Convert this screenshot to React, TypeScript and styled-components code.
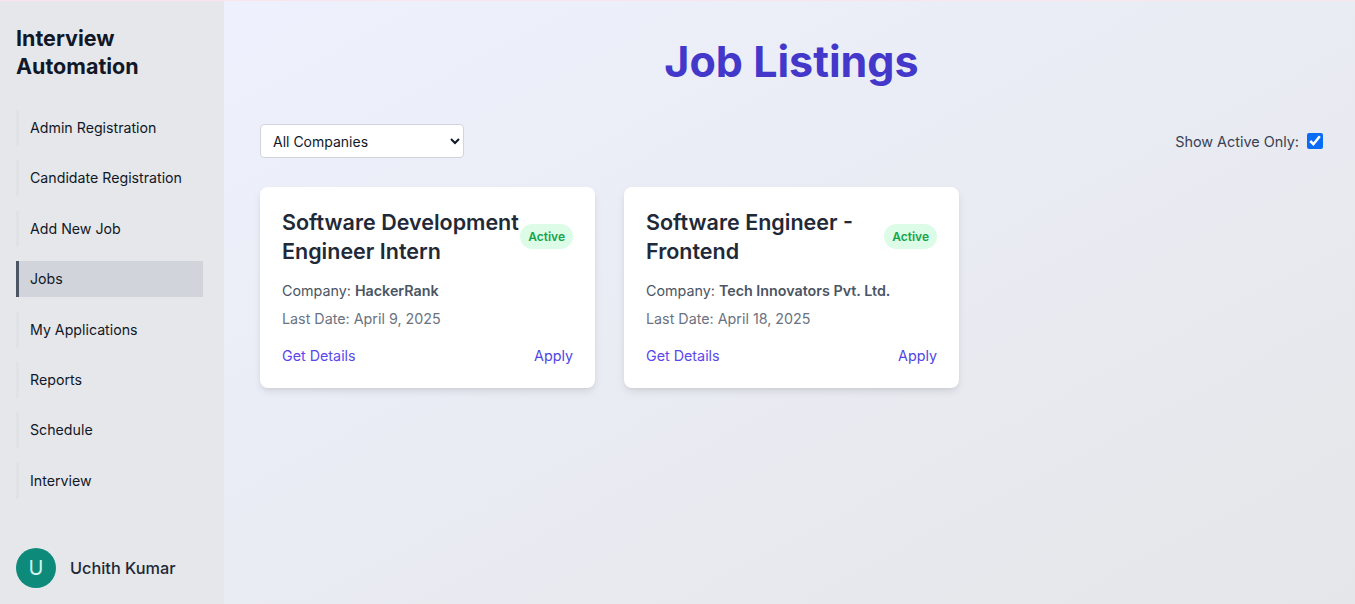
import styled, { createGlobalStyle } from 'styled-components'
import { FC } from 'react'

const GlobalStyle = createGlobalStyle`
  * {
    box-sizing: border-box;
  }
  body {
    margin: 0;
    font-family: Inter, "Noto Sans", sans-serif;
    color: #111827;
  }
`

const Layout = styled.div`
  display: flex;
  min-height: 100vh;
  border-top: 1px solid #fbe4ec;
`

const Sidebar = styled.aside`
  width: 224px;
  flex-shrink: 0;
  background: #e5e7eb;
  display: flex;
  flex-direction: column;
  padding: 23px 16px 16px;
`

const Brand = styled.div`
  font-size: 21.5px;
  line-height: 28px;
  font-weight: 700;
  color: #111827;
  margin-bottom: 30px;
`

const Nav = styled.nav`
  display: flex;
  flex-direction: column;
  gap: 14.4px;
  flex: 1;
`

const NavItem = styled.a<{ $active?: boolean }>`
  display: block;
  height: 36px;
  line-height: 36px;
  margin-right: 5px;
  padding-left: 11px;
  font-size: 14.2px;
  color: #111827;
  text-decoration: none;
  border-left: 3px solid ${(p) => (p.$active ? '#4b5563' : '#e0e2e6')};
  background: ${(p) => (p.$active ? '#d1d5db' : 'transparent')};
  cursor: pointer;
`

const User = styled.div`
  display: flex;
  align-items: center;
  gap: 14px;
`

const Avatar = styled.div`
  width: 40px;
  height: 40px;
  border-radius: 50%;
  background: #0e8a7b;
  color: #d6f5ef;
  display: flex;
  align-items: center;
  justify-content: center;
  font-size: 20px;
`

const UserName = styled.span`
  font-size: 16.3px;
  font-weight: 500;
  color: #1f2937;
`

const Main = styled.main`
  flex: 1;
  min-width: 0;
  background: linear-gradient(to bottom right, #eef1fd, #e5e6e9);
  padding: 36px 32px 32px 36px;
`

const Heading = styled.h1`
  margin: 0 0 39px;
  text-align: center;
  font-size: 43px;
  line-height: 48px;
  font-weight: 700;
  color: #4338ca;
`

const Toolbar = styled.div`
  display: flex;
  justify-content: space-between;
  align-items: center;
  margin-bottom: 29px;
`

const Select = styled.select`
  width: 204px;
  height: 34px;
  padding: 0 8px;
  font-family: Inter, sans-serif;
  font-size: 14px;
  color: #111827;
  background: #fff;
  border: 1px solid #d1d5db;
  border-radius: 4px;
`

const Toggle = styled.label`
  display: flex;
  align-items: center;
  gap: 8px;
  font-size: 14.4px;
  color: #374151;

  input {
    width: 16px;
    height: 16px;
    margin: 0;
    accent-color: #0a6cf5;
  }
`

const Grid = styled.div`
  display: grid;
  grid-template-columns: repeat(3, minmax(0, 1fr));
  gap: 29px;
`

const Card = styled.div`
  background: #fff;
  border-radius: 8px;
  padding: 21px 22px 22px;
  box-shadow: 0 4px 8px -1px rgba(0, 0, 0, 0.1), 0 2px 4px -2px rgba(0, 0, 0, 0.08);
`

const CardHead = styled.div`
  display: flex;
  justify-content: space-between;
  align-items: center;
  margin-bottom: 15px;
`

const JobTitle = styled.h2`
  margin: 0;
  font-size: 21.5px;
  line-height: 29px;
  font-weight: 600;
  color: #1f2937;
`

const Badge = styled.span`
  flex-shrink: 0;
  margin-bottom: 1px;
  padding: 4px 8px;
  line-height: 17px;
  font-size: 12px;
  font-weight: 600;
  color: #16a34a;
  background: #dcfce7;
  border-radius: 999px;
`

const Info = styled.p<{ $muted?: boolean }>`
  margin: 0 0 8px;
  font-size: 14.3px;
  line-height: 20px;
  color: ${(p) => (p.$muted ? '#6b7280' : '#4b5563')};

  b {
    font-weight: 600;
  }
`

const Actions = styled.div`
  display: flex;
  justify-content: space-between;
  margin-top: 17px;
`

const LinkButton = styled.a<{ $tone: string }>`
  font-size: 14.3px;
  line-height: 20px;
  color: ${(p) => p.$tone};
  text-decoration: none;
  cursor: pointer;
`

type Job = {
  title: string
  company: string
  lastDate: string
}

const jobs: Job[] = [
  {
    title: 'Software Development Engineer Intern',
    company: 'HackerRank',
    lastDate: 'April 9, 2025',
  },
  {
    title: 'Software Engineer - Frontend',
    company: 'Tech Innovators Pvt. Ltd.',
    lastDate: 'April 18, 2025',
  },
]

const links = [
  'Admin Registration',
  'Candidate Registration',
  'Add New Job',
  'Jobs',
  'My Applications',
  'Reports',
  'Schedule',
  'Interview',
]

const App: FC = () => {
  return (
    <>
      <GlobalStyle />
      <Layout>
        <Sidebar>
          <Brand>
            Interview
            <br />
            Automation
          </Brand>
          <Nav>
            {links.map((link) => (
              <NavItem key={link} $active={link === 'Jobs'}>
                {link}
              </NavItem>
            ))}
          </Nav>
          <User>
            <Avatar>U</Avatar>
            <UserName>Uchith Kumar</UserName>
          </User>
        </Sidebar>
        <Main>
          <Heading>Job Listings</Heading>
          <Toolbar>
            <Select defaultValue="all">
              <option value="all">All Companies</option>
              <option value="hackerrank">HackerRank</option>
              <option value="tech">Tech Innovators Pvt. Ltd.</option>
            </Select>
            <Toggle>
              Show Active Only:
              <input type="checkbox" defaultChecked />
            </Toggle>
          </Toolbar>
          <Grid>
            {jobs.map((job) => (
              <Card key={job.title}>
                <CardHead>
                  <JobTitle>{job.title}</JobTitle>
                  <Badge>Active</Badge>
                </CardHead>
                <Info>
                  Company: <b>{job.company}</b>
                </Info>
                <Info $muted>Last Date: {job.lastDate}</Info>
                <Actions>
                  <LinkButton $tone="#5b47ee">Get Details</LinkButton>
                  <LinkButton $tone="#4f46e5">Apply</LinkButton>
                </Actions>
              </Card>
            ))}
          </Grid>
        </Main>
      </Layout>
    </>
  )
}

export default App
